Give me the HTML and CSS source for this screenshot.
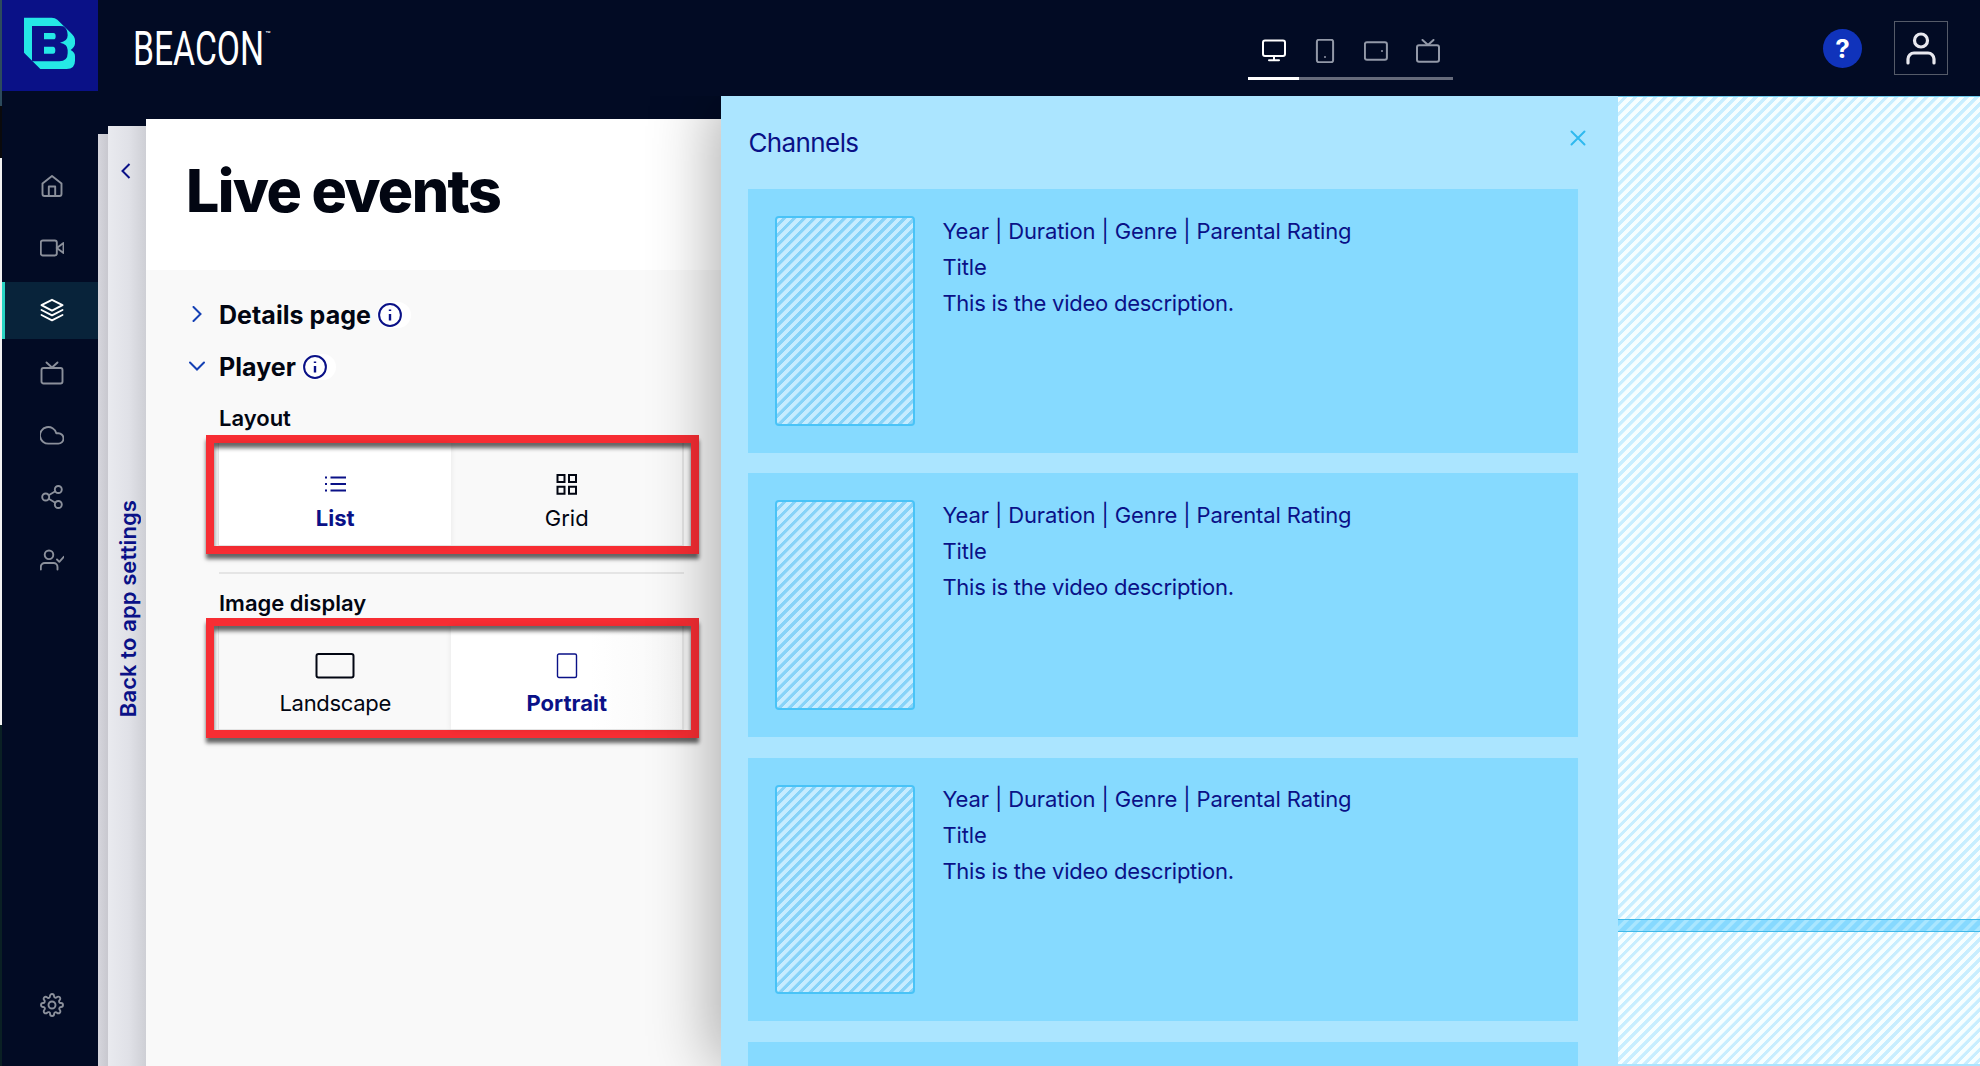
FILE: index.html
```html
<!DOCTYPE html>
<html lang="en">
<head>
<meta charset="utf-8">
<title>Beacon – Live events</title>
<link rel="stylesheet" href="styles.css">
</head>
<body>
<div class="app">
  <div class="desktop-edge"></div>
  <aside class="sidebar">
    <div class="logo">
      <svg width="96" height="91" viewBox="6 0 288 273"><path fill="#25e8e6" d="M72 53H155Q165 53 172 59L212 98Q225 110 225 120V131Q224 141 212 150Q225 158 225 168V182Q225 207 200 207H121L72 158Z"/><path fill="#0a1187" d="M96 78H180L190 79Q203 87 203 106Q203 124 180 128Q203 132 203 150V160Q203 184 178 184H100L96 182Z"/><path fill="#25e8e6" d="M132 99H160Q167 99 167 108.500T160 118H132ZM132 140H159Q166 140 166 150.500T159 161H132Z"/></svg>
    </div>
    <nav class="nav">
      <a class="nav-item"><svg class="icon" viewBox="0 0 24 24"><path d="M2.500 9.500 12 2l9.500 7.500V20a2 2 0 0 1-2 2h-15a2 2 0 0 1-2-2Z"/><path d="M8.800 22v-9.500h6.400V22"/></svg></a>
      <a class="nav-item"><svg class="icon" viewBox="0 0 24 24"><rect x=".8" y="4.500" width="16" height="15" rx="2"/><path d="m23.500 7-6.700 5 6.700 5Z"/></svg></a>
      <a class="nav-item active"><svg class="icon" viewBox="0 0 24 24"><path d="m12 1.800 10.500 5.400L12 12.600 1.500 7.200Z"/><path d="m1.500 12 10.500 5.300L22.500 12M1.500 17 12 22.300 22.500 17"/></svg></a>
      <a class="nav-item"><svg class="icon" viewBox="0 0 24 24"><rect x="1.500" y="7" width="21" height="15.500" rx="2"/><path d="m6.500 1.500 5.500 5 5.500-5"/></svg></a>
      <a class="nav-item"><svg class="icon" viewBox="0 0 24 24"><path d="M16.300 10.200h2a5.200 5.200 0 0 1 0 10.400H9.200a8.300 8.300 0 1 1 7.100-10.400Z"/></svg></a>
      <a class="nav-item"><svg class="icon" viewBox="0 0 24 24"><circle cx="18.300" cy="4.500" r="3.500"/><circle cx="5.700" cy="12" r="3.500"/><circle cx="18.300" cy="19.500" r="3.500"/><path d="m8.700 13.800 6.600 3.900M15.300 6.300l-6.600 3.900"/></svg></a>
      <a class="nav-item"><svg class="icon" viewBox="0 0 24 24"><circle cx="9" cy="6.800" r="4.300"/><path d="M.8 21.500V19a4 4 0 0 1 4-4h8.700a4 4 0 0 1 4 4v2.500M17 11.500l2.300 2.300 4.500-5"/></svg></a>
    </nav>
    <a class="nav-item settings"><svg class="icon" viewBox="0 0 24 24"><circle cx="12" cy="12" r="3.500"/><path d="M19.400 15a1.650 1.650 0 0 0 .33 1.820l.06.06a2 2 0 1 1-2.830 2.830l-.06-.06a1.650 1.650 0 0 0-2.800 1.170V21a2 2 0 0 1-4 0v-.09A1.650 1.650 0 0 0 7.200 19.700l-.06.06a2 2 0 1 1-2.830-2.830l.06-.06A1.650 1.650 0 0 0 3.090 14H3a2 2 0 0 1 0-4h.09A1.650 1.650 0 0 0 4.300 7.200l-.06-.06a2 2 0 1 1 2.830-2.830l.06.06A1.650 1.650 0 0 0 10 3.090V3a2 2 0 0 1 4 0v.09a1.650 1.650 0 0 0 2.800 1.170l.06-.06a2 2 0 1 1 2.830 2.830l-.06.06A1.650 1.650 0 0 0 20.910 10H21a2 2 0 0 1 0 4h-.09a1.650 1.650 0 0 0-1.510 1Z"/></svg></a>
  </aside>
  <div class="workspace">
    <header class="topbar">
      <svg class="wordmark" width="144" height="48" viewBox="0 0 144 48"><text class="wordmark-name" x="-2" y="41" textLength="131" lengthAdjust="spacingAndGlyphs">BEACON</text><text class="wordmark-tm" x="130.500" y="12.500">™</text></svg>
      <div class="devices">
        <a class="device current"><svg class="icon" viewBox="0 0 24 24"><rect x="1" y="1.500" width="22" height="15.500" rx="2"/><path d="M12 17v4M7 21.300h10"/></svg></a>
        <a class="device"><svg class="icon" viewBox="0 0 24 24"><rect x="3.900" y=".8" width="16.200" height="22.400" rx="2"/><path d="M12 18v.1"/></svg></a>
        <a class="device"><svg class="icon" viewBox="0 0 24 24"><rect x=".9" y="3.300" width="22" height="17.500" rx="2"/><path d="M18 12v.1"/></svg></a>
        <a class="device"><svg class="icon" viewBox="0 0 24 24"><rect x="1" y="6.300" width="22" height="16.500" rx="2"/><path d="m6.500 1 5.500 5 5.500-5"/></svg></a>
      </div>
      <div class="account">
        <div class="help">?</div>
        <div class="user"><svg width="32" height="34" viewBox="0 0 32 34" fill="none" stroke="#e8e8ee" stroke-width="3.200" stroke-linecap="round"><circle cx="16" cy="9.500" r="6.500"/><path d="M3 32v-4a6 6 0 0 1 6-6h14a6 6 0 0 1 6 6v4"/></svg></div>
      </div>
    </header>
    <div class="stage">
      <div class="sheet-back"></div>
      <div class="sheet-mid">
        <svg class="back-chevron" width="10" height="16" viewBox="0 0 10 16"><path d="M8.500 1 1.500 8l7 7" fill="none" stroke="#0a1187" stroke-width="2"/></svg>
        <span class="back-label">Back to app settings</span>
      </div>
      <section class="panel">
        <div class="panel-head"><h1>Live events</h1></div>
        <div class="panel-body">
          <div class="row">
            <svg class="chev" viewBox="0 0 16 16"><path d="m4.500 1 7 7-7 7"/></svg><h2>Details page</h2>
            <span class="info"><svg width="24" height="24" viewBox="0 0 24 24"><circle cx="12" cy="12" r="10.900"/><path d="M12 11v6.500M12 6.500v1.600" stroke-width="2.400"/></svg></span>
          </div>
          <div class="row">
            <svg class="chev" viewBox="0 0 16 16"><path d="m1 4.500 7 7 7-7"/></svg><h2>Player</h2>
            <span class="info"><svg width="24" height="24" viewBox="0 0 24 24"><circle cx="12" cy="12" r="10.900"/><path d="M12 11v6.500M12 6.500v1.600" stroke-width="2.400"/></svg></span>
          </div>
          <h3>Layout</h3>
          <div class="callout layout-choice">
            <div class="option selected"><svg width="21" height="24" viewBox="0 0 21 24" stroke="#0a1187" stroke-width="2"><path d="M0 4.500h2M0 11h2M0 17.500h2M5.500 4.500H21M5.500 11H21M5.500 17.500H21"/></svg><span>List</span></div>
            <div class="option"><svg width="22" height="24" viewBox="0 0 22 24" fill="none" stroke="#020612" stroke-width="2"><path d="M1.500 2h7v7h-7ZM13 2h7v7h-7ZM1.500 13.700h7v7h-7ZM13 13.700h7v7h-7Z"/></svg><span>Grid</span></div>
          </div>
          <hr>
          <h3 class="image-title">Image display</h3>
          <div class="callout image-choice">
            <div class="option"><svg width="40" height="26" viewBox="0 0 40 26" fill="none" stroke="#020612" stroke-width="2"><rect x="1.500" y="1" width="37" height="23.500" rx="2"/></svg><span class="tight">Landscape</span></div>
            <div class="option selected"><svg width="22" height="26" viewBox="0 0 22 26" fill="none" stroke="#0a1187" stroke-width="1.400"><rect x="1.500" y="1" width="19" height="23.500" rx="1.500"/></svg><span>Portrait</span></div>
          </div>
        </div>
      </section>
    </div>
  </div>
  <main class="preview">
    <section class="channels">
      <div class="channels-head"><span>Channels</span><svg width="16" height="16" viewBox="0 0 16 16"><path d="m1.500 1.500 13 13M14.500 1.500l-13 13" stroke="#2fb9ef" stroke-width="2" stroke-linecap="round"/></svg></div>
      <article class="card"><div class="thumb"></div><div class="meta"><p>Year | Duration | Genre | Parental Rating</p><p>Title</p><p class="desc">This is the video description.</p></div></article>
      <article class="card"><div class="thumb"></div><div class="meta"><p>Year | Duration | Genre | Parental Rating</p><p>Title</p><p class="desc">This is the video description.</p></div></article>
      <article class="card"><div class="thumb"></div><div class="meta"><p>Year | Duration | Genre | Parental Rating</p><p>Title</p><p class="desc">This is the video description.</p></div></article>
      <article class="card"></article>
    </section>
    <div class="video"><div class="video-main"></div><div class="video-bar"></div><div class="video-lower"></div></div>
  </main>
</div>
</body>
</html>
```
FILE: styles.css
```css
* { box-sizing: border-box; }
body, h1, h2, h3, p { margin: 0; }
body { font-family: Inter, "Liberation Sans", sans-serif; font-size: 22px; color: #020612; overflow: hidden; }

.app {
  display: grid;
  grid-template-columns: 2px 96px 623.400px 1fr;
  grid-template-rows: 96px 970px;
  width: 1980px;
  height: 1066px;
  background: #020b24;
  overflow: hidden;
}
.desktop-edge {
  grid-row: 1 / 3;
  background: linear-gradient(#2c4a5c 0 106px, #0a0a0c 106px 158px, #f2f2f2 158px 725px, #0a2024 725px);
}

.sidebar { grid-row: 1 / 3; display: flex; flex-direction: column; background: #020b24; border-bottom-left-radius: 6px; }
.logo { height: 91px; background: #0a1187; }
.logo svg { display: block; }
.nav { padding-top: 66px; display: flex; flex-direction: column; gap: 5.350px; }
.nav-item { height: 57px; display: flex; align-items: center; justify-content: center; padding-left: 3px; color: #8b909b; }
.nav-item.active { background: #08233a; color: #fff; border-left: 3px solid #2ad4c4; padding: 0; }
.settings { margin-top: auto; margin-bottom: 33px; }
.icon { width: 24px; height: 24px; fill: none; stroke: currentColor; stroke-width: 1.900; stroke-linecap: round; stroke-linejoin: round; }

.workspace { grid-column: 3 / 5; grid-row: 1 / 3; display: grid; grid-template-rows: 96px 970px; min-width: 0; }
.topbar { display: grid; grid-template-columns: 1150px 1fr auto; padding-right: 32px; }
.wordmark { margin: 24px 0 0 37px; overflow: visible; }
.wordmark-name { font: 400 48.500px Roboto, sans-serif; fill: #fff; }
.wordmark-tm { font: 500 8px Inter, sans-serif; fill: #fff; }
.devices { display: flex; align-items: flex-start; padding-top: 38.500px; }
.device { width: 51.300px; height: 41.500px; display: flex; justify-content: center; border-bottom: 3px solid #666b7b; color: #9399a8; }
.device.current { border-color: #fff; color: #fff; }
.device .icon { stroke-width: 2; }
.account { display: flex; gap: 32px; align-items: center; }
.help { width: 39px; height: 39px; border-radius: 50%; background: #1033bb; color: #fff; font: 700 26px/39px Inter, sans-serif; text-align: center; }
.user { width: 54px; height: 54px; border: 1.500px solid #555b69; display: flex; align-items: center; justify-content: center; }

.stage { display: flex; width: 624px; }
.sheet-back { width: 10px; margin-top: 38px; background: linear-gradient(90deg, #d6d6dd, #c8c8cf); }
.sheet-mid { width: 38px; margin-top: 30px; background: linear-gradient(90deg, #e9eaef, #e0e1e7 55%, #cecfd5); display: flex; flex-direction: column; align-items: center; }
.back-chevron { margin: 37px 0 0 -2px; }
.back-label { writing-mode: vertical-rl; transform: rotate(180deg); font-weight: 600; line-height: 30px; letter-spacing: .1px; color: #0a1187; margin: 321px 0 0 2px; }

.panel { width: 576px; margin-top: 23px; background: #f9f9f9; }
.panel-head { height: 151px; background: #fff; padding: 35px 0 0 40px; }
h1 { font-size: 59px; line-height: 73px; font-weight: 800; letter-spacing: -1.650px; }
.panel-body { padding: 19px 23px 0 60px; }
.row { height: 52px; margin-left: -22px; display: flex; align-items: center; }
.chev { width: 16px; height: 16px; flex: none; margin: -2px 14px 0 5px; fill: none; stroke: #1440b4; stroke-width: 2; stroke-linecap: round; }
h2 { font-size: 25px; line-height: 30px; font-weight: 700; letter-spacing: .05px; }
.info { display: flex; width: 34px; height: 26px; margin-left: 6px; padding: 1px; background: #fff; border-radius: 13px; fill: none; stroke: #0a1187; stroke-width: 2; }
h3 { font-size: 22px; line-height: 27px; font-weight: 600; padding: 12px 0 3px 13px; }
.image-title { padding-bottom: 1px; }
.callout { position: relative; display: flex; height: 119px; padding: 0 7px 0 4px; border: 8.500px solid #f72d33; box-shadow: 0 5px 4px rgba(0,0,0,.6); }
.callout::after { content: ""; position: absolute; inset: 0; box-shadow: inset 0 5px 4px rgba(0,0,0,.6); }
.image-choice { height: 120px; }
.option { flex: 1; display: flex; flex-direction: column; align-items: center; gap: 8px; padding: 30px 0 0 1px; line-height: 27px; border: solid #e4e4e4; border-width: 0 0 1px; }
.option:first-child { border-left-width: 1px; }
.option:last-child { border-right-width: 2px; }
.image-choice .option { gap: 11.500px; padding-top: 26.500px; }
.option.selected { color: #0a1187; font-weight: 700; background: #fff; box-shadow: 0 0 6px rgba(0,0,0,.08); }
.image-choice .selected { background: linear-gradient(90deg, #fff 60%, #f8f8f8); }
.option svg { flex: none; }
.tight { letter-spacing: -.3px; }
hr { height: 2px; border: 0; background: #e5e5e5; margin: 18px 15px 4px 13px; }

.preview { grid-column: 4; grid-row: 2; display: grid; grid-template-columns: 896.600px 1fr; z-index: 1; background: #abe5ff; box-shadow: -8px 0 60px rgba(0,0,0,.32); clip-path: inset(0 0 0 -100px); min-width: 0; }
.channels { padding: 0 40px 0 27px; overflow: hidden; height: 970px; color: #0a1187; }
.channels-head { height: 93px; display: flex; justify-content: space-between; padding-top: 30.500px; font-size: 26px; line-height: 32px; letter-spacing: -.6px; }
.channels-head svg { margin: 3px -8px 0 0; }
.card { display: flex; height: 263.500px; margin-bottom: 20.800px; padding: 27px; background: #86daff; }
.thumb { width: 140px; height: 209.500px; border: 2px solid #49c3f7; border-radius: 4px; background: repeating-linear-gradient(135deg, #c6ecff 0 3.500px, #87d3f8 3.900px 6.700px, #c6ecff 7.100px); }
.meta { margin: -3.500px 0 0 27px; line-height: 36px; letter-spacing: -.12px; }
.desc { letter-spacing: -.25px; }
.video { display: grid; grid-template-rows: 822px 13px 1fr 2px; background: #abe5ff; border-top: 1px solid #70cdf0; height: 970px; }
.video-main, .video-lower { background: repeating-linear-gradient(135deg, #f6feff 0 3.500px, #c8eeff 3.900px 6.700px, #f6feff 7.100px); }
.video-bar { border: solid #3fb9e9; border-width: 1px 0; background: repeating-linear-gradient(135deg, #86d9ff 0 4px, #a9e6ff 5px 7.500px, #86d9ff 8.500px); }
```
